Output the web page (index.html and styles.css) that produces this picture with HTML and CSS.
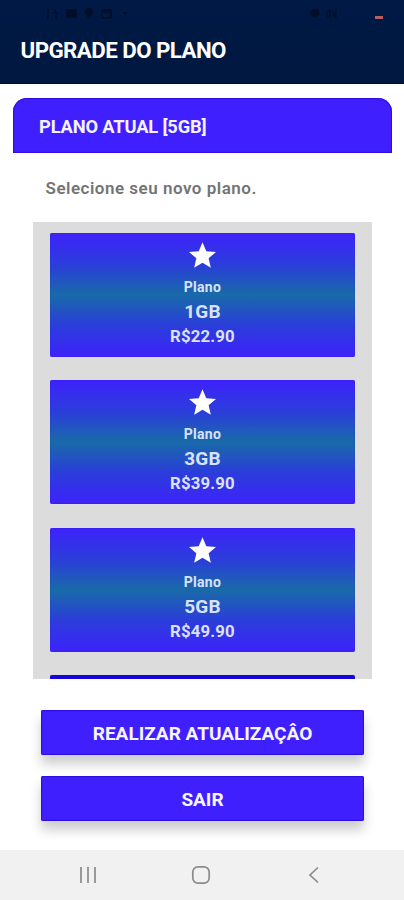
FILE: index.html
```html
<!DOCTYPE html>
<html lang="pt-BR">
<head>
<meta charset="utf-8">
<title>Upgrade do plano</title>
<link rel="stylesheet" href="styles.css">
</head>
<body>
<header class="top">
  <div class="status">
    <svg class="status-left" width="88" height="14" viewBox="0 0 88 14">
      <path d="M7 3v10M14 3v3M12 7h5M15 9v4"/>
      <path class="solid" d="M25 3h11v9H25zM48 2a4 4 0 0 1 4 4c0 3-4 7-4 7s-4-4-4-7a4 4 0 0 1 4-4zM81 6h6l-3 3z"/>
      <path d="M61 4h9v8h-9zM62 6h7M64 3v2M67 3v2"/>
    </svg>
    <svg class="status-right" width="76" height="14" viewBox="0 0 76 14">
      <circle class="solid" cx="5" cy="7" r="4.5"/>
      <path d="M17 6l3-2v8l-3-2zM22 4l3 8M26 3v9"/>
      <path class="battery" d="M65 11.5h8"/>
    </svg>
  </div>
  <h1 class="title">UPGRADE DO PLANO</h1>
</header>
<main class="content">
  <h2 class="current">PLANO ATUAL [5GB]</h2>
  <p class="hint">Selecione seu novo plano.</p>
  <section class="plans">
    <article class="plan">
      <svg class="star" viewBox="2 2 20 19"><path d="M12 17.27 18.18 21l-1.64-7.03L22 9.24l-7.19-.61L12 2 9.19 8.63 2 9.24l5.46 4.73L5.82 21z"/></svg>
      <div class="label">Plano</div><div class="size">1GB</div><div class="price">R$22.90</div>
    </article>
    <article class="plan">
      <svg class="star" viewBox="2 2 20 19"><path d="M12 17.27 18.18 21l-1.64-7.03L22 9.24l-7.19-.61L12 2 9.19 8.63 2 9.24l5.46 4.73L5.82 21z"/></svg>
      <div class="label">Plano</div><div class="size">3GB</div><div class="price">R$39.90</div>
    </article>
    <article class="plan">
      <svg class="star" viewBox="2 2 20 19"><path d="M12 17.27 18.18 21l-1.64-7.03L22 9.24l-7.19-.61L12 2 9.19 8.63 2 9.24l5.46 4.73L5.82 21z"/></svg>
      <div class="label">Plano</div><div class="size">5GB</div><div class="price">R$49.90</div>
    </article>
    <article class="plan plan-next"></article>
  </section>
  <div class="actions">
    <button class="btn">REALIZAR ATUALIZAÇÂO</button>
    <button class="btn exit">SAIR</button>
  </div>
</main>
<nav class="nav">
  <svg width="18" height="18" viewBox="0 0 18 18"><path d="M2 1v16M9 1v16M16 1v16"/></svg>
  <svg width="20" height="20" viewBox="0 0 20 20"><rect x="1.8" y="1.8" width="16.4" height="16.4" rx="5.2"/></svg>
  <svg width="12" height="18" viewBox="0 0 12 18"><path d="M10 1.5 2 9l8 7.5"/></svg>
</nav>
</body>
</html>
```

FILE: styles.css
```css
* { box-sizing: border-box; }
body {
  margin: 0;
  height: 900px;
  overflow: hidden;
  display: flex;
  flex-direction: column;
  background: #fff;
  font-family: Roboto, "Liberation Sans", sans-serif;
  font-weight: 700;
}
.top {
  height: 84px;
  flex: none;
  background: linear-gradient(#001a46, #00183f);
  border-bottom: 1.5px solid #080a14;
}
.status {
  height: 27px;
  padding: 6px 18px 0 41px;
  display: flex;
  justify-content: space-between;
}
.status svg { fill: none; stroke: #030e28; stroke-width: 1.4; }
.status .solid { fill: #030e28; stroke: none; }
.status .battery { stroke: #bc5d60; stroke-width: 3; }
.title {
  margin: 0;
  padding-left: 20.5px;
  font-size: 22.3px;
  line-height: 47px;
  letter-spacing: -.55px;
  color: #fff;
}
.content { flex: 1; }
.current {
  height: 55px;
  margin: 14px 12px 0 13px;
  padding-left: 26px;
  border-radius: 14px 14px 0 0;
  background: #401fff;
  box-shadow: inset 0 0 1px 1px #2b0ee0;
  color: #f4f2ff;
  font-size: 18.3px;
  line-height: 57px;
  letter-spacing: -.15px;
}
.hint {
  margin: 0;
  height: 69px;
  padding-left: 45.5px;
  color: #747474;
  font-size: 17px;
  font-weight: 600;
  line-height: 70px;
  letter-spacing: .5px;
}
.plans {
  width: 339px;
  height: 457px;
  margin-left: 33px;
  padding: 11px 17px 0;
  overflow: hidden;
  display: flex;
  flex-direction: column;
  gap: 23.4px;
  background: #dcdcdc;
}
.plan {
  height: 124px;
  flex: none;
  padding-top: 9px;
  display: flex;
  flex-direction: column;
  align-items: center;
  border-radius: 2px;
  background: linear-gradient(#3e22fb 0%, #2b3ddb 25%, #186aa8 50%, #2b3ddb 75%, #3e22fb 100%);
  box-shadow: inset 0 0 1px #1c10dc;
  color: #d9e2fb;
}
.plan-next { background: #1507dc; }
.star { width: 27px; height: 26px; fill: #fff; }
.label { margin-top: 9px; font-size: 14px; line-height: 20px; letter-spacing: .3px; }
.size { margin-top: 2px; font-size: 19px; line-height: 26px; letter-spacing: .1px; }
.price { font-size: 16.8px; line-height: 22px; letter-spacing: .15px; }
.actions {
  padding: 31px 40px 0 41px;
  display: flex;
  flex-direction: column;
  gap: 21px;
}
.btn {
  height: 45px;
  padding: 2px 0 0;
  border: 0;
  border-radius: 2px;
  background: #401fff;
  box-shadow: inset 0 0 1px 1px #2b0ee0, 0 9px 12px rgba(0, 0, 0, .2);
  color: #f6f4ff;
  font: inherit;
  font-size: 19px;
}
.exit { padding-top: 1px; }
.nav {
  height: 50px;
  flex: none;
  padding: 0 84px 0 79px;
  display: flex;
  align-items: center;
  justify-content: space-between;
  background: #f1f1f1;
}
.nav svg { overflow: visible; fill: none; stroke: #8b8b8b; stroke-width: 1.7; }
.nav rect { transform: translateX(-2px); }
```
